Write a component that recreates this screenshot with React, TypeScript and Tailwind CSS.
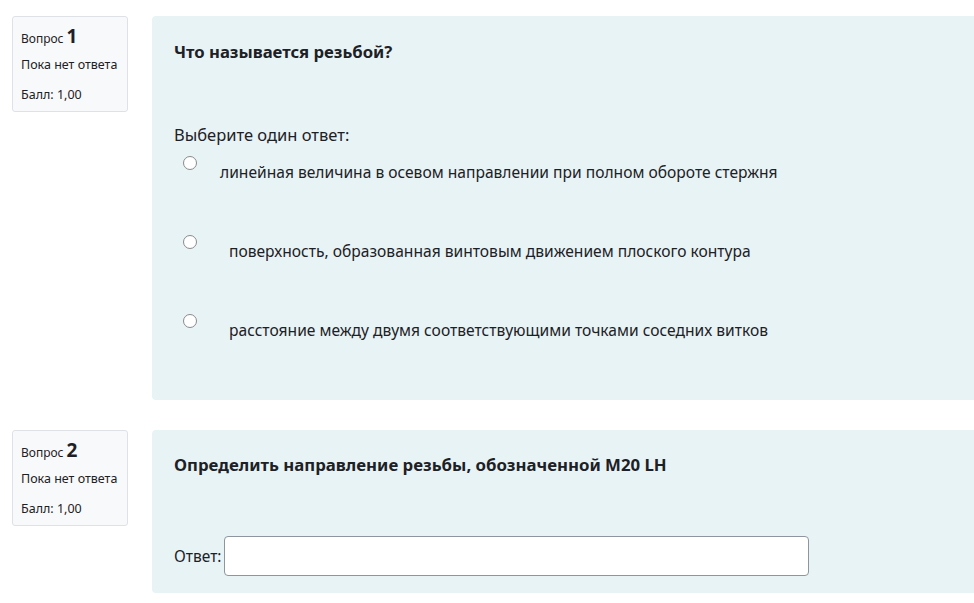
const font = { fontFamily: '"Noto Sans", "Open Sans", sans-serif' };

function InfoBox({ num }: { num: number }) {
  return (
    <div className="w-[116px] h-[96px] shrink-0 rounded-[3px] border border-[#dee2e6] bg-[#f8f9fa] pl-[8px] pt-[10px] text-[#1d2125]">
      <div className="flex items-baseline gap-[3px] h-[24px]">
        <span className="text-[12px]">Вопрос</span>
        <span className="text-[19px] font-bold leading-none">{num}</span>
      </div>
      <div className="text-[12.5px] mt-[5px] leading-[18px]">Пока нет ответа</div>
      <div className="text-[12.5px] mt-[12px] leading-[18px]">Балл: 1,00</div>
    </div>
  );
}

function Radio() {
  return <span className="block w-[14px] h-[14px] rounded-full border border-[#8a8a8a] bg-white shrink-0" />;
}

const options = [
  { text: 'линейная величина в осевом направлении при полном обороте стержня', indent: 'ml-[23px]' },
  { text: 'поверхность, образованная винтовым движением плоского контура', indent: 'ml-[32px]' },
  { text: 'расстояние между двумя соответствующими точками соседних витков', indent: 'ml-[32px]' },
];

export default function App() {
  return (
    <div className="min-h-[603px] bg-white pt-[16px] pl-[12px] text-[#1d2125]" style={font}>
      <div className="flex gap-[24px]">
        <InfoBox num={1} />
        <div className="flex-1 h-[384px] rounded-l-[4px] bg-[#e7f3f5] pl-[22px] pt-[24px]">
          <div className="text-[16.7px] font-bold leading-[24px]">Что называется резьбой?</div>
          <div className="mt-[60px] text-[16.5px] leading-[22px]">Выберите один ответ:</div>
          <div className="mt-[8px] flex flex-col gap-[51px]">
            {options.map((o) => (
              <div key={o.text} className="flex items-start pl-[9px]">
                <div className="pt-[2px]">
                  <Radio />
                </div>
                <span className={`${o.indent} mt-[8px] text-[15.6px] leading-[20px]`}>{o.text}</span>
              </div>
            ))}
          </div>
        </div>
      </div>

      <div className="flex gap-[24px] mt-[30px]">
        <InfoBox num={2} />
        <div className="flex-1 h-[163px] rounded-l-[4px] bg-[#e7f3f5] pl-[22px] pt-[23px]">
          <div className="text-[16.8px] font-bold leading-[24px]">Определить направление резьбы, обозначенной M20 LH</div>
          <div className="mt-[59px] flex items-center gap-[2px]">
            <span className="text-[15.5px] leading-[20px]">Ответ:</span>
            <input
              type="text"
              className="w-[585px] h-[40px] rounded-[4px] border border-[#8f959e] bg-white outline-none"
            />
          </div>
        </div>
      </div>
    </div>
  );
}
